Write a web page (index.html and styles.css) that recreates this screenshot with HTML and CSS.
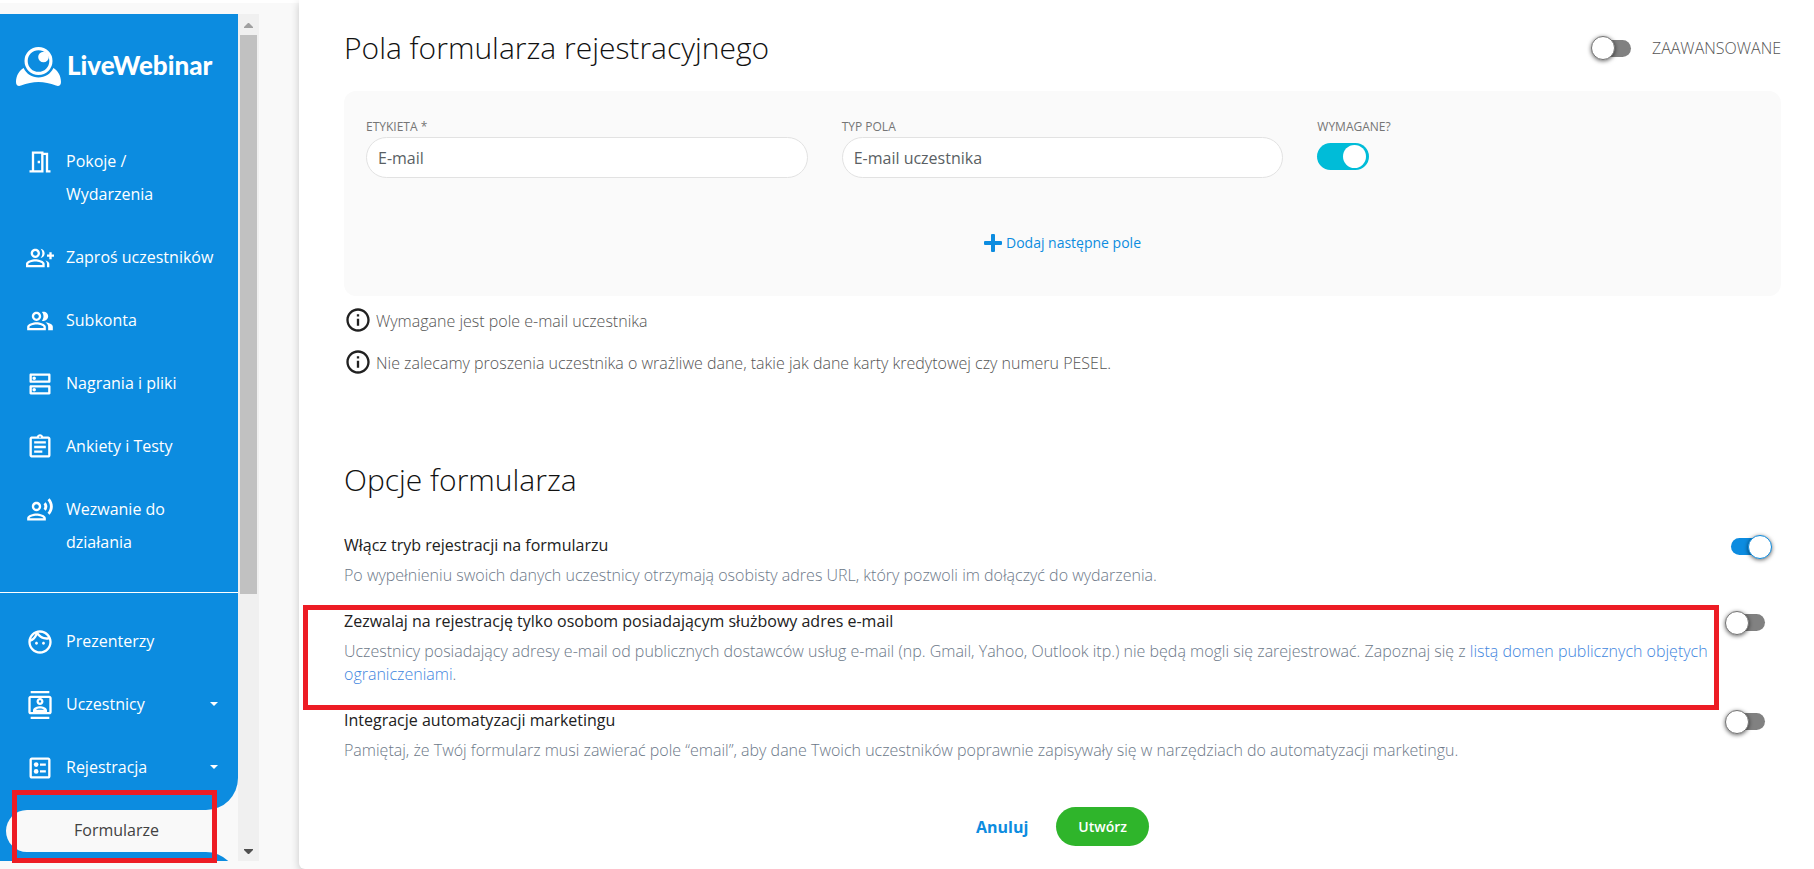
FILE: index.html
```
<!DOCTYPE html>
<html lang="pl">
<head>
<meta charset="utf-8">
<meta name="viewport" content="width=device-width, initial-scale=1">
<title>LiveWebinar – Formularze</title>
<link rel="stylesheet" href="styles.css">
</head>
<body>
<div class="layout">
  <aside class="sidebar">
    <div class="sidebar-view">
      <nav class="nav-block nav-block-top">
        <a class="logo" href="#">
          <svg class="logo-mark" viewBox="0 0 45 39" aria-hidden="true">
            <path fill="#fff" fill-rule="evenodd" d="M22.500 0a14 14 0 1 1 0 28a14 14 0 1 1 0-28zM22.500 3.200a10.800 10.800 0 1 0 0 21.600a10.800 10.800 0 1 0 0-21.600z"/>
            <circle cx="27.500" cy="10" r="5.300" fill="#fff"/>
            <path fill="#fff" d="M7.600 21C10.500 27 16 30.500 22.500 30.500S34.500 27 37.400 21C41.500 23.500 45 28.500 45 35C45 38.500 42.800 39.500 40 38.600C28 33.700 17 33.700 5 38.600C2.200 39.500 0 38.500 0 35C0 28.500 3.500 23.500 7.600 21z"/>
          </svg>
          <span>LiveWebinar</span>
        </a>
        <a class="nav-item" href="#">
          <svg class="icon" viewBox="0 0 24 24" aria-hidden="true"><path d="M19 19V4h-4V3H5v16H3v2h12V6h2v15h4v-2h-2zm-6 0H7V5h6v14zm-3-8h2v2h-2z"/></svg>
          <span class="nav-text nav-text-narrow">Pokoje / Wydarzenia</span>
        </a>
        <a class="nav-item" href="#">
          <svg class="icon" viewBox="0 0 24 24" aria-hidden="true"><path d="M22 9V7h-2v2h-2v2h2v2h2v-2h2V9zM8 12c2.210 0 4-1.790 4-4s-1.790-4-4-4-4 1.790-4 4 1.790 4 4 4zm0-6c1.100 0 2 .9 2 2s-.9 2-2 2-2-.9-2-2 .9-2 2-2zm0 7c-2.670 0-8 1.340-8 4v3h16v-3c0-2.660-5.330-4-8-4zm6 5H2v-.99C2.200 16.290 5.300 15 8 15s5.800 1.290 6 2v1zM12.510 4.050C13.430 5.110 14 6.490 14 8s-.57 2.890-1.490 3.950C14.470 11.700 16 10.040 16 8s-1.530-3.700-3.490-3.950zM16.530 13.830C17.420 14.660 18 15.700 18 17v3h2v-3c0-1.450-1.590-2.510-3.470-3.170z"/></svg>
          <span class="nav-text">Zaproś uczestników</span>
        </a>
        <a class="nav-item" href="#">
          <svg class="icon" viewBox="0 0 24 24" aria-hidden="true"><path d="M16.670 13.130C18.040 14.060 19 15.320 19 17v3h4v-3c0-2.180-3.570-3.470-6.330-3.870zM15 12c2.210 0 4-1.790 4-4s-1.790-4-4-4c-.47 0-.91.1-1.330.24C14.500 5.270 15 6.580 15 8s-.5 2.730-1.330 3.760c.42.14.86.24 1.330.24zM9 12c2.210 0 4-1.790 4-4s-1.790-4-4-4-4 1.790-4 4 1.790 4 4 4zm0-6c1.100 0 2 .9 2 2s-.9 2-2 2-2-.9-2-2 .9-2 2-2zM9 13c-2.670 0-8 1.340-8 4v3h16v-3c0-2.660-5.330-4-8-4zm6 5H3v-.99C3.200 16.290 6.300 15 9 15s5.800 1.290 6 2v1z"/></svg>
          <span class="nav-text">Subkonta</span>
        </a>
        <a class="nav-item" href="#">
          <svg class="icon" viewBox="0 0 24 24" aria-hidden="true"><path d="M19 15v4H5v-4h14m1-2H4c-.55 0-1 .45-1 1v6c0 .55.45 1 1 1h16c.55 0 1-.45 1-1v-6c0-.55-.45-1-1-1zM7 18.500c-.82 0-1.500-.67-1.500-1.500s.68-1.500 1.500-1.500 1.500.67 1.500 1.500-.67 1.500-1.500 1.500zM19 5v4H5V5h14m1-2H4c-.55 0-1 .45-1 1v6c0 .55.45 1 1 1h16c.55 0 1-.45 1-1V4c0-.55-.45-1-1-1zM7 8.500c-.82 0-1.500-.67-1.500-1.500S6.180 5.500 7 5.500s1.500.68 1.500 1.500S7.830 8.500 7 8.500z"/></svg>
          <span class="nav-text">Nagrania i pliki</span>
        </a>
        <a class="nav-item" href="#">
          <svg class="icon" viewBox="0 0 24 24" aria-hidden="true"><path d="M7 15h7v2H7zm0-4h10v2H7zm0-4h10v2H7zm12-4h-4.180C14.400 1.840 13.300 1 12 1c-1.300 0-2.400.84-2.820 2H5c-.14 0-.27.01-.4.04-.39.08-.74.28-1.010.55-.18.18-.33.4-.43.64-.1.23-.16.49-.16.77v14c0 .27.06.54.16.78s.25.45.43.64c.27.27.62.47 1.010.55.13.02.26.03.4.03h14c1.100 0 2-.9 2-2V5c0-1.100-.9-2-2-2zm-7-.25c.41 0 .75.34.75.75s-.34.75-.75.75-.75-.34-.75-.75.34-.75.75-.75zM19 19H5V5h14v14z"/></svg>
          <span class="nav-text">Ankiety i Testy</span>
        </a>
        <a class="nav-item" href="#">
          <svg class="icon" viewBox="0 0 24 24" aria-hidden="true"><path d="M9 13c2.210 0 4-1.790 4-4s-1.790-4-4-4-4 1.790-4 4 1.790 4 4 4zm0-6c1.100 0 2 .9 2 2s-.9 2-2 2-2-.9-2-2 .9-2 2-2zm0 8c-2.670 0-8 1.340-8 4v2h16v-2c0-2.660-5.330-4-8-4zm-6 4c.22-.72 3.310-2 6-2 2.700 0 5.800 1.290 6 2H3zM15.080 7.050c.84 1.180.84 2.710 0 3.890l1.680 1.690c2.020-2.020 2.020-5.070 0-7.270l-1.680 1.690zM20.070 2l-1.630 1.630c2.770 3.020 2.770 7.560 0 10.740L20.070 16c3.900-3.890 3.910-9.950 0-14z"/></svg>
          <span class="nav-text nav-text-narrow">Wezwanie do działania</span>
        </a>
        <hr class="divider">
        <a class="nav-item" href="#">
          <svg class="icon" viewBox="0 0 24 24" aria-hidden="true"><path d="M10.250 13c0 .69-.56 1.250-1.250 1.250S7.750 13.690 7.750 13s.56-1.250 1.250-1.250 1.250.56 1.250 1.250zM15 11.750c-.69 0-1.250.56-1.250 1.250s.56 1.250 1.250 1.250 1.250-.56 1.250-1.250-.56-1.250-1.250-1.250zm7 .25c0 5.520-4.480 10-10 10S2 17.520 2 12 6.480 2 12 2s10 4.480 10 10zM10.660 4.120C12.060 6.440 14.600 8 17.500 8c.46 0 .91-.05 1.340-.12C17.440 5.560 14.900 4 12 4c-.46 0-.91.05-1.340.12zM4.420 9.470c1.710-.97 3.030-2.550 3.660-4.440C6.370 6 5.050 7.580 4.420 9.470zM20 12c0-.78-.12-1.530-.33-2.240-.7.15-1.420.24-2.170.24-3.130 0-5.920-1.440-7.760-3.690C8.690 8.870 6.600 10.880 4 11.860c.01.04 0 .09 0 .14 0 4.420 3.580 8 8 8s8-3.580 8-8z"/></svg>
          <span class="nav-text">Prezenterzy</span>
        </a>
        <a class="nav-item" href="#">
          <svg class="icon" viewBox="0 0 24 24" aria-hidden="true"><path d="M20 4H4c-1.100 0-2 .9-2 2v12c0 1.100.9 2 2 2h16c1.100 0 2-.9 2-2V6c0-1.100-.9-2-2-2zm0 14H4V6h16v12zM4 0h16v2H4zm0 22h16v2H4zm8-10c1.660 0 3-1.340 3-3s-1.340-3-3-3-3 1.340-3 3 1.340 3 3 3zm0-4c.55 0 1 .45 1 1s-.45 1-1 1-1-.45-1-1 .45-1 1-1zm6 8.590c0-2.500-3.970-3.580-6-3.580s-6 1.080-6 3.580V18h12v-1.410zM8.480 16c.74-.51 2.230-1 3.520-1s2.780.49 3.520 1H8.480z"/></svg>
          <span class="nav-text">Uczestnicy</span>
          <svg class="caret" viewBox="0 0 8 4" aria-hidden="true"><path d="M0 0h8L4 4z"/></svg>
        </a>
        <a class="nav-item" href="#">
          <svg class="icon" viewBox="0 0 24 24" aria-hidden="true"><path d="M19 3H5c-1.100 0-2 .9-2 2v14c0 1.100.9 2 2 2h14c1.100 0 2-.9 2-2V5c0-1.100-.9-2-2-2zm0 16H5V5h14v14zM12 8.200h5v1.800h-5zM12 14h5v1.800h-5z"/><circle cx="8.700" cy="9.100" r="2"/><circle cx="8.700" cy="14.900" r="2"/></svg>
          <span class="nav-text">Rejestracja</span>
          <svg class="caret" viewBox="0 0 8 4" aria-hidden="true"><path d="M0 0h8L4 4z"/></svg>
        </a>
      </nav>
      <div class="active-row">
        <a class="active-item" href="#" aria-current="page">Formularze</a>
      </div>
      <div class="nav-block nav-block-rest"></div>
    </div>
    <div class="scrollbar" aria-hidden="true">
      <svg class="scroll-arrow" viewBox="0 0 9 5"><path fill="#a0a0a0" d="M4 0h1l4 4v1H0V4z"/></svg>
      <div class="scroll-thumb"></div>
      <svg class="scroll-arrow" viewBox="0 0 9 5"><path fill="#505050" d="M0 0h9v1L5 5H4L0 1z"/></svg>
    </div>
    <div class="highlight highlight-nav"></div>
  </aside>

  <main class="panel">
    <header class="panel-head">
      <h1 class="heading">Pola formularza rejestracyjnego</h1>
      <div class="advanced">
        <input class="toggle" type="checkbox" role="switch" id="advanced">
        <label for="advanced">ZAAWANSOWANE</label>
      </div>
    </header>

    <section class="card">
      <div class="fields">
        <div class="field">
          <label class="field-label" for="etykieta">ETYKIETA *</label>
          <input class="control" type="text" id="etykieta" value="E-mail">
        </div>
        <div class="field">
          <label class="field-label" for="typ">TYP POLA</label>
          <select class="control" id="typ"><option>E-mail uczestnika</option></select>
        </div>
        <div class="field">
          <label class="field-label" for="wymagane">WYMAGANE?</label>
          <input class="switch" type="checkbox" role="switch" id="wymagane" checked>
        </div>
      </div>
      <button class="add-field" type="button">
        <svg class="plus" viewBox="0 0 18 18" aria-hidden="true"><path d="M8 0h2q1 0 1 1v6h6q1 0 1 1v2q0 1-1 1h-6v6q0 1-1 1H8q-1 0-1-1v-6H1q-1 0-1-1V8q0-1 1-1h6V1q0-1 1-1z"/></svg>
        Dodaj następne pole
      </button>
    </section>

    <ul class="notes">
      <li class="note">
        <svg class="icon" viewBox="0 0 24 24" aria-hidden="true"><path d="M11 7h2v2h-2zm0 4h2v6h-2zm1-9C6.480 2 2 6.480 2 12s4.480 10 10 10 10-4.480 10-10S17.520 2 12 2zm0 18c-4.410 0-8-3.590-8-8s3.590-8 8-8 8 3.590 8 8-3.590 8-8 8z"/></svg>
        <span>Wymagane jest pole e-mail uczestnika</span>
      </li>
      <li class="note">
        <svg class="icon" viewBox="0 0 24 24" aria-hidden="true"><path d="M11 7h2v2h-2zm0 4h2v6h-2zm1-9C6.480 2 2 6.480 2 12s4.480 10 10 10 10-4.480 10-10S17.520 2 12 2zm0 18c-4.410 0-8-3.590-8-8s3.590-8 8-8 8 3.590 8 8-3.590 8-8 8z"/></svg>
        <span>Nie zalecamy proszenia uczestnika o wrażliwe dane, takie jak dane karty kredytowej czy numeru PESEL.</span>
      </li>
    </ul>

    <h2 class="heading options-heading">Opcje formularza</h2>
    <div class="options">
      <div class="option">
        <div class="option-text">
          <label class="option-title" for="opt-reg">Włącz tryb rejestracji na formularzu</label>
          <p class="option-desc">Po wypełnieniu swoich danych uczestnicy otrzymają osobisty adres URL, który pozwoli im dołączyć do wydarzenia.</p>
        </div>
        <input class="toggle" type="checkbox" role="switch" id="opt-reg" checked>
      </div>
      <div class="option">
        <div class="option-text">
          <label class="option-title" for="opt-business">Zezwalaj na rejestrację tylko osobom posiadającym służbowy adres e-mail</label>
          <p class="option-desc">Uczestnicy posiadający adresy e-mail od publicznych dostawców usług e-mail (np. Gmail, Yahoo, Outlook itp.) nie będą mogli się zarejestrować. Zapoznaj się z <a class="desc-link" href="#">listą domen publicznych objętych ograniczeniami</a>.</p>
        </div>
        <input class="toggle" type="checkbox" role="switch" id="opt-business">
        <div class="highlight highlight-option"></div>
      </div>
      <div class="option">
        <div class="option-text">
          <label class="option-title" for="opt-marketing">Integracje automatyzacji marketingu</label>
          <p class="option-desc">Pamiętaj, że Twój formularz musi zawierać pole “email”, aby dane Twoich uczestników poprawnie zapisywały się w narzędziach do automatyzacji marketingu.</p>
        </div>
        <input class="toggle" type="checkbox" role="switch" id="opt-marketing">
      </div>
    </div>

    <div class="actions">
      <button class="cancel" type="button">Anuluj</button>
      <button class="create" type="submit">Utwórz</button>
    </div>
  </main>
</div>
</body>
</html>
```

FILE: styles.css
```
:root {
  --blue: #0c8ce0;
  --page: #f9f9f9;
  --red: #ed1c24;
}

* {
  box-sizing: border-box;
}

body {
  margin: 0;
  background: #fff;
  color: #212121;
  font-family: "Open Sans", "Noto Sans", sans-serif;
  font-size: 16px;
  line-height: 24px;
}

button,
input,
select {
  margin: 0;
  font-family: inherit;
}

.layout {
  display: flex;
  min-height: 100vh;
  background: var(--page);
  border-top: 3px solid #fff;
}

/* Sidebar */
.sidebar {
  position: relative;
  display: flex;
  flex: none;
  width: 299px;
  height: calc(100vh - 22px);
  margin-top: 11px;
}

.sidebar-view {
  display: flex;
  flex-direction: column;
  width: 238px;
  overflow: hidden;
}

.nav-block {
  background: var(--blue);
}

.nav-block-top {
  flex: none;
  padding-bottom: 11px;
  border-bottom-right-radius: 32px;
}

.nav-block-rest {
  flex: 1 0 32px;
  border-top-right-radius: 32px;
}

.logo {
  display: flex;
  gap: 6px;
  padding: 33px 16px 44px;
  color: #fff;
  font-family: Lato, sans-serif;
  font-size: 26px;
  font-weight: 900;
  line-height: 37px;
  text-decoration: none;
}

.logo-mark {
  flex: none;
  width: 45px;
  height: 39px;
}

.icon {
  flex: none;
  width: 28px;
  height: 28px;
  fill: currentColor;
}

.nav-item {
  display: flex;
  gap: 12px;
  padding: 15px 20px 15px 26px;
  color: #fff;
  line-height: 33px;
  text-decoration: none;
}

.nav-item .icon {
  margin-top: 3px;
}

.nav-text {
  flex: 1;
}

.nav-text-narrow {
  max-width: 120px;
}

.caret {
  width: 8px;
  height: 4px;
  margin: 14px 0 0 auto;
  fill: currentColor;
}

.divider {
  height: 1px;
  margin: 18px 0 17px;
  border: 0;
  background: #fff;
}

.active-row {
  flex: none;
  padding-left: 6px;
  background: linear-gradient(to right, var(--blue) 60px, var(--page) 60px);
}

.active-item {
  display: block;
  padding: 0 0 2px 68px;
  border-radius: 21px 0 0 21px;
  background: var(--page);
  color: #424242;
  line-height: 40px;
  text-decoration: none;
}

.scrollbar {
  display: flex;
  flex-direction: column;
  align-items: center;
  width: 21px;
  background: #f0f0f0;
}

.scroll-arrow {
  flex: none;
  width: 9px;
  height: 5px;
  margin: 9px 0 7px;
}

.scroll-thumb {
  width: 17px;
  height: 66%;
  margin-bottom: auto;
  background: #c1c1c1;
}

/* Annotation frames */
.highlight {
  position: absolute;
  border: 5px solid var(--red);
  pointer-events: none;
}

.highlight-nav {
  left: 12px;
  bottom: -2px;
  width: 205px;
  height: 73px;
}

.highlight-option {
  top: -4px;
  right: 62px;
  bottom: -24px;
  left: -41px;
}

/* Main panel */
.panel {
  flex: 1;
  min-width: 0;
  margin-top: -3px;
  padding: 27px 33px 23px 45px;
  border-bottom-left-radius: 6px;
  background: #fff;
  box-shadow: 0 3px 8px rgba(0, 0, 0, 0.2);
}

.panel-head {
  display: flex;
  justify-content: space-between;
  align-items: center;
  margin-bottom: 22px;
}

.heading {
  margin: 0;
  color: #111;
  font-size: 30px;
  font-weight: 300;
  line-height: 42px;
}

.advanced {
  display: flex;
  align-items: center;
  gap: 21px;
  color: #555;
  font-weight: 300;
}

.toggle {
  appearance: none;
  flex: none;
  display: flex;
  align-items: center;
  width: 34px;
  height: 17px;
  border-radius: 9px;
  background: #818181;
}

.toggle::before {
  content: "";
  flex: none;
  width: 22px;
  height: 22px;
  margin-left: -6px;
  border: 1px solid #757575;
  border-radius: 50%;
  background: #fff;
  box-shadow: 0 1px 4px rgba(0, 0, 0, 0.6);
}

.toggle:checked {
  background: var(--blue);
}

.toggle:checked::before {
  margin-left: 17px;
  border-color: var(--blue);
}

.card {
  padding: 28px 22px 41px;
  border-radius: 12px;
  background: #fafafa;
}

.fields {
  display: grid;
  grid-template-columns: repeat(3, 1fr);
  gap: 34px;
}

.field-label {
  display: block;
  margin-bottom: 2px;
  color: #757575;
  font-size: 12px;
  line-height: 16px;
}

.control {
  appearance: none;
  display: block;
  width: 100%;
  height: 41px;
  padding: 0 11px;
  border: 1px solid #e2e2e2;
  border-radius: 21px;
  background: #fff;
  color: #5a5f64;
  font-size: 16px;
}

.switch {
  appearance: none;
  display: flex;
  align-items: center;
  justify-content: flex-end;
  width: 52px;
  height: 27px;
  margin-top: 8px;
  padding: 2px 3px;
  border-radius: 14px;
  background: #00bcd8;
}

.switch::before {
  content: "";
  width: 23px;
  height: 23px;
  border-radius: 50%;
  background: #fff;
}

.add-field {
  display: flex;
  align-items: center;
  gap: 4px;
  margin: 53px auto 0;
  padding: 0;
  border: 0;
  background: none;
  color: var(--blue);
  font-size: 14px;
  line-height: 24px;
}

.plus {
  width: 18px;
  height: 18px;
  fill: currentColor;
}

.notes {
  display: grid;
  gap: 14px;
  margin: 10px 0 83px;
  padding: 0;
  list-style: none;
}

.note {
  display: flex;
  gap: 4px;
  font-weight: 300;
  line-height: 30px;
  height: 28px;
}

.note span {
  color: #555;
}

.options-heading {
  margin-bottom: 32px;
}

.options {
  display: grid;
  gap: 22px;
}

.option {
  position: relative;
  display: flex;
  justify-content: space-between;
  padding-right: 16px;
}

.option .toggle {
  margin-top: 5px;
}

.option-text {
  padding-right: 16px;
}

.option-title {
  display: block;
}

.option-desc {
  margin: 7px 0 0;
  color: #6c7888;
  font-weight: 300;
  line-height: 23px;
}

.desc-link {
  color: #3f86de;
  text-decoration: none;
}

.actions {
  display: flex;
  justify-content: center;
  gap: 28px;
  margin-top: 45px;
}

.cancel,
.create {
  border: 0;
  font-weight: 700;
}

.cancel {
  padding: 0;
  background: none;
  color: var(--blue);
  font-size: 16px;
}

.create {
  padding: 0 22px;
  border-radius: 20px;
  background: #2fb52b;
  color: #fff;
  font-size: 14px;
  font-weight: 600;
  line-height: 39px;
}
```
